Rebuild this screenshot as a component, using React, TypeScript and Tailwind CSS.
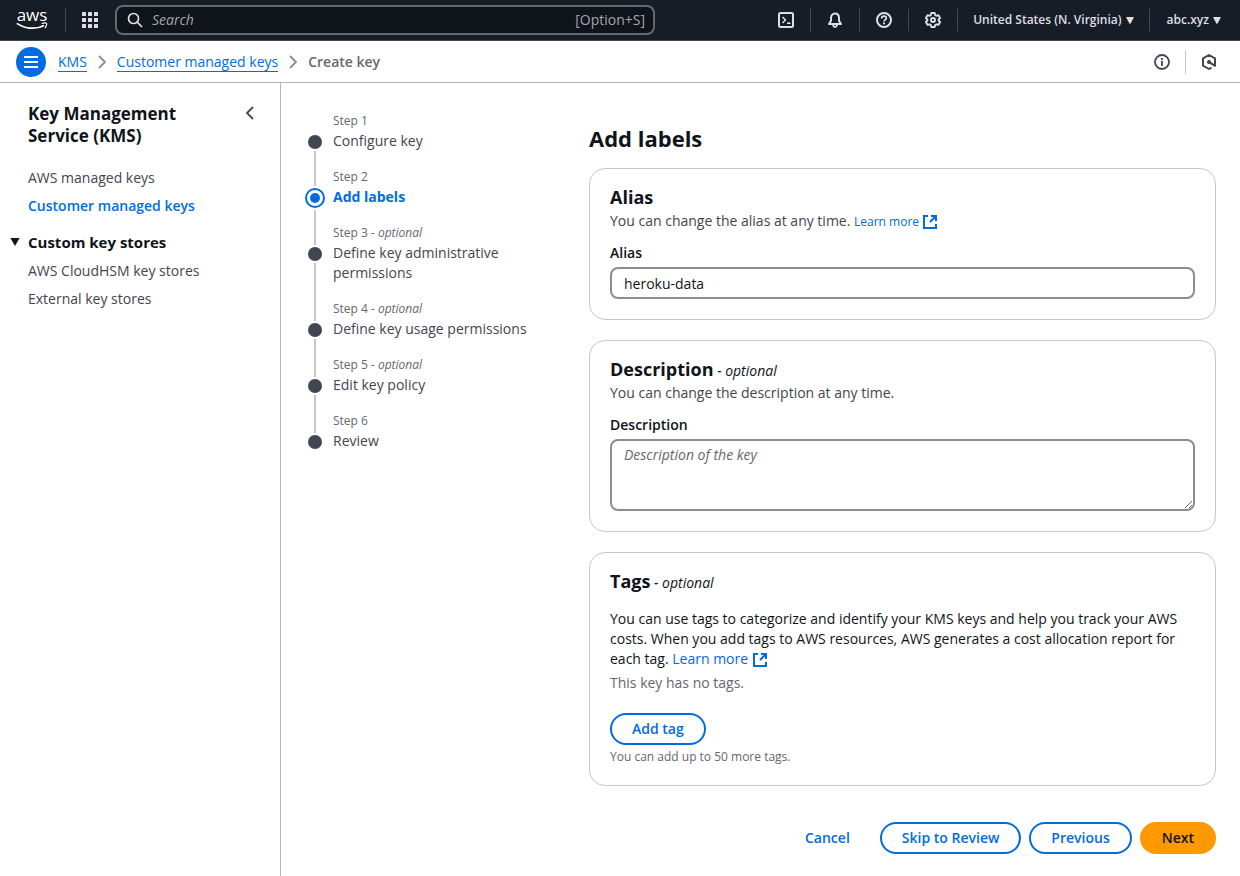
import { useState, type ReactNode } from 'react';
import clsx from 'clsx';

interface Step {
  title: string;
  optional?: boolean;
}

const STEPS: Step[] = [
  { title: 'Configure key' },
  { title: 'Add labels' },
  { title: 'Define key administrative permissions', optional: true },
  { title: 'Define key usage permissions', optional: true },
  { title: 'Edit key policy', optional: true },
  { title: 'Review' },
];

const ACTIVE_STEP = 1;

const Icon = ({ children, className = 'size-4' }: { children: ReactNode; className?: string }) => (
  <svg
    viewBox="0 0 16 16"
    fill="none"
    stroke="currentColor"
    strokeWidth="2"
    strokeLinejoin="round"
    className={clsx('shrink-0', className)}
    aria-hidden
  >
    {children}
  </svg>
);

const ExternalIcon = () => (
  <svg viewBox="0 0 16 16" fill="none" stroke="currentColor" strokeWidth="2" className="inline-block size-4 align-text-bottom" aria-hidden>
    <path d="M6 2H2v12h12v-4M9 2h5v5M14 2 8 8" />
  </svg>
);

const Caret = () => (
  <svg viewBox="0 0 8 7" fill="currentColor" className="h-[7px] w-2" aria-hidden>
    <path d="M.6 0h6.8q.6 0 .4.6L4.6 6.4q-.6.8-1.2 0L.2.6Q0 0 .6 0Z" />
  </svg>
);

const AwsLogo = () => (
  <a href="#" aria-label="AWS home" className="flex w-8 flex-col items-center text-white">
    <span className="h-3 text-[17px] leading-[10px] font-medium">aws</span>
    <svg viewBox="0 0 32 8" fill="none" stroke="currentColor" className="h-2 w-8" aria-hidden>
      <path d="M.8 1.4C9.5 7.2 20.5 7.6 28 3.4" strokeWidth="1.7" />
      <path d="M25.6 1.5c2.2-.6 4.4-.6 4.9-.1.5.6-.1 3-1.6 4.7" strokeWidth="1.2" />
    </svg>
  </a>
);

const TopBar = () => (
  <header className="flex h-[41px] items-center border-b border-[#424650] bg-[#161d26] pl-4 text-[#dedee3]">
    <AwsLogo />
    <div className="ml-[17px] h-6 w-px bg-[#424650]" />
    <button type="button" aria-label="Services" className="ml-4">
      <svg viewBox="0 0 16 16" fill="currentColor" className="size-4" aria-hidden>
        {[0, 6, 12].map((y) => [0, 6, 12].map((x) => <rect key={`${x}-${y}`} x={x} y={y} width="4" height="4" rx=".5" />))}
      </svg>
    </button>
    <label className="ml-[17px] flex h-[30px] w-[540px] items-center rounded-lg border-2 border-[#656871] bg-[#0f141a] pr-2 pl-[10px]">
      <Icon>
        <circle cx="6.5" cy="6.5" r="5" strokeWidth="1.7" />
        <path d="m10.2 10.2 4.8 4.8" strokeWidth="1.7" />
      </Icon>
      <input
        type="text"
        aria-label="Search"
        placeholder="Search"
        className="ml-[9px] min-w-0 flex-1 bg-transparent text-sm outline-none placeholder:text-[#a4a4ad] placeholder:italic"
      />
      <span className="text-sm text-[#a4a4ad]">[Option+S]</span>
    </label>
    <nav className="ml-auto flex h-full items-center pr-[19px]">
      <button type="button" aria-label="CloudShell" className="px-4">
        <Icon>
          <rect x="1" y="1" width="14" height="14" rx="1.5" />
          <path d="m4.5 5 3 3-3 3" strokeWidth="1.5" />
          <path d="M9 11.2h3.5" strokeWidth="1.6" />
        </Icon>
      </button>
      <div className="h-6 w-px bg-[#424650]" />
      <button type="button" aria-label="Notifications" className="px-4">
        <Icon>
          <path d="M8 1.5C5.4 1.5 4 3.4 4 6v2.8L2 12h12l-2-3.2V6c0-2.6-1.4-4.5-4-4.5Z" strokeWidth="2" />
          <path d="M6 12.5c.2 1.7 1 2.5 2 2.5s1.8-.8 2-2.5" strokeWidth="1.8" />
        </Icon>
      </button>
      <div className="h-6 w-px bg-[#424650]" />
      <button type="button" aria-label="Help" className="px-4">
        <Icon>
          <circle cx="8" cy="8" r="7" />
          <path d="M5.7 6.5C5.7 5 6.7 4.2 8 4.2s2.3.8 2.3 2c0 1.6-2.3 1.7-2.3 3.4" strokeWidth="1.8" />
          <path d="M8 10.6v1.7" strokeWidth="2" />
        </Icon>
      </button>
      <div className="h-[22px] w-px bg-[#424650]" />
      <button type="button" aria-label="Settings" className="px-4">
        <Icon>
          <path
            d="M6.3 1h3.4l.5 2.1 1.2.7 2.1-.6 1.6 2.9L13.6 7.5v1l1.5 1.5-1.6 2.9-2.1-.6-1.2.7-.5 2H6.3l-.5-2-1.2-.7-2.1.6L.9 10l1.5-1.5v-1L.9 6.1l1.6-2.9 2.1.6 1.2-.7Z"
            strokeWidth="1.9"
          />
          <circle cx="8" cy="8" r="2" strokeWidth="1.9" />
        </Icon>
      </button>
      <div className="h-[22px] w-px bg-[#424650]" />
      <button type="button" className="flex items-center gap-1 px-[15px] text-xs font-semibold">
        United States (N. Virginia) <Caret />
      </button>
      <div className="h-[22px] w-px bg-[#424650]" />
      <button type="button" className="flex items-center gap-1 pl-[17px] text-xs font-semibold">
        abc.xyz <Caret />
      </button>
    </nav>
  </header>
);

const Chevron = ({ left }: { left?: boolean }) => (
  <Icon>
    <path d={left ? 'M11 2 5 8l6 6' : 'm5 2 6 6-6 6'} strokeWidth="1.8" strokeLinejoin="miter" />
  </Icon>
);

const BreadcrumbBar = () => (
  <div className="flex h-[42px] items-center border-b border-[#b4b4bb] pr-[23px] pl-4">
    <button
      type="button"
      aria-label="Open navigation"
      className="flex size-[30px] items-center justify-center rounded-full bg-[#006ce0] text-white"
    >
      <Icon>
        <path d="M1 3h14M1 8h14M1 13h14" />
      </Icon>
    </button>
    <nav aria-label="Breadcrumbs" className="ml-3 flex items-center gap-[7px] text-sm">
      <a href="#" className="border-b border-[#006ce0] leading-[19px] text-[#006ce0]">KMS</a>
      <span className="text-[#8c8c94]"><Chevron /></span>
      <a href="#" className="border-b border-[#006ce0] leading-[19px] text-[#006ce0]">Customer managed keys</a>
      <span className="text-[#8c8c94]"><Chevron /></span>
      <span className="font-semibold text-[#656871]">Create key</span>
    </nav>
    <div className="ml-auto flex items-center text-[#424650]">
      <button type="button" aria-label="Info">
        <Icon>
          <circle cx="8" cy="8" r="7" strokeWidth="1.8" />
          <path d="M8 4v2M8 7v5" strokeWidth="1.8" />
        </Icon>
      </button>
      <div className="mx-[15px] h-6 w-px bg-[#c6c6cd]" />
      <button type="button" aria-label="Amazon Q">
        <Icon>
          <path d="M10.5 13.6 8 15l-6-3.400V4.400L8 1l6 3.400v7.400L8.500 8.300" strokeWidth="2" />
          <circle cx="8" cy="8" r="1.600" fill="currentColor" strokeWidth="1" />
        </Icon>
      </button>
    </div>
  </div>
);

const SideNav = () => (
  <aside className="w-[281px] shrink-0 border-r border-[#b4b4bb] pt-5 pr-[22px] pl-7 text-sm leading-5 text-[#424650]">
    <div className="flex items-start justify-between">
      <h2 className="w-[180px] text-[17px] leading-[22px] font-bold text-[#0f141a]">Key Management Service (KMS)</h2>
      <button type="button" aria-label="Close navigation" className="mt-0.5">
        <Chevron left />
      </button>
    </div>
    <ul className="mt-[21px] space-y-2">
      <li><a href="#">AWS managed keys</a></li>
      <li><a href="#" className="font-semibold text-[#006ce0]">Customer managed keys</a></li>
    </ul>
    <details open className="mt-4">
      <summary className="-ml-[18px] flex cursor-pointer list-none items-center gap-2 text-[15px] leading-5 font-bold text-[#0f141a]">
        <svg viewBox="0 0 8 7" fill="currentColor" className="h-2 w-[10px]" aria-hidden>
          <path d="M0 0h8L4 7Z" />
        </svg>
        Custom key stores
      </summary>
      <ul className="mt-[9px] space-y-2">
        <li><a href="#">AWS CloudHSM key stores</a></li>
        <li><a href="#">External key stores</a></li>
      </ul>
    </details>
  </aside>
);

const StepList = () => (
  <nav aria-label="Steps" className="w-[240px] shrink-0">
    <ol className="text-sm leading-5 text-[#424650]">
      {STEPS.map(({ title, optional }, index) => {
        const active = index === ACTIVE_STEP;
        const last = index === STEPS.length - 1;
        return (
          <li key={title} className="flex gap-2">
            <div className="flex w-5 flex-col items-center gap-0.5">
              <div className={clsx('w-0.5', active ? 'h-[19px]' : 'h-[22px]', index > 0 && 'bg-[#c6c6cd]')} />
              {active ? (
                <div className="size-5 rounded-full border-2 border-[#006ce0] p-[3px]">
                  <div className="size-[10px] rounded-full bg-[#006ce0]" />
                </div>
              ) : (
                <div className="size-[14px] rounded-full bg-[#424650]" />
              )}
              {!last && <div className="w-0.5 flex-1 bg-[#c6c6cd]" />}
            </div>
            <div className="flex-1 pb-4">
              <p className="text-xs leading-5 text-[#656871]">
                Step {index + 1}
                {optional && <i> - optional</i>}
              </p>
              <a
                href="#"
                aria-current={active ? 'step' : undefined}
                className={clsx('block', active && 'font-bold text-[#006ce0]')}
              >
                {title}
              </a>
            </div>
          </li>
        );
      })}
    </ol>
  </nav>
);

interface CardProps {
  title: string;
  optional?: boolean;
  children: ReactNode;
}

const Card = ({ title, optional, children }: CardProps) => (
  <section className="rounded-2xl border border-[#c6c6cd] px-5 pt-4 pb-5">
    <h2 className="text-lg leading-6 font-bold">
      {title}
      {optional && <i className="text-sm font-normal"> - optional</i>}
    </h2>
    {children}
  </section>
);

const OutlineButton = ({ children }: { children: ReactNode }) => (
  <button
    type="button"
    className="h-8 rounded-full border-2 border-[#006ce0] px-5 text-sm font-semibold text-[#006ce0]"
  >
    {children}
  </button>
);

const App = () => {
  const [alias, setAlias] = useState('heroku-data');
  const [description, setDescription] = useState('');

  return (
    <div className="flex min-h-screen flex-col bg-white font-['Open_Sans',sans-serif] text-[#0f141a]">
      <TopBar />
      <BreadcrumbBar />
      <div className="flex flex-1">
        <SideNav />
        <div className="flex flex-1 gap-11 px-6 pt-7 pb-[22px]">
          <StepList />
          <main className="min-w-0 flex-1 pt-3 text-sm leading-5">
            <h1 className="text-[22px] leading-[30px] font-bold">Add labels</h1>
            <div className="mt-[15px] space-y-5">
              <Card title="Alias">
                <p className="mt-0.5 text-[#424650]">
                  You can change the alias at any time.{' '}
                  <a href="#" className="text-xs text-[#006ce0]">Learn more <ExternalIcon /></a>
                </p>
                <label htmlFor="alias" className="mt-3 block font-semibold">Alias</label>
                <input
                  id="alias"
                  value={alias}
                  onChange={(event) => setAlias(event.target.value)}
                  className="mt-1 block h-8 w-full rounded-lg border-2 border-[#8c8c94] px-3"
                />
              </Card>
              <Card title="Description" optional>
                <p className="mt-0.5 text-[#424650]">You can change the description at any time.</p>
                <label htmlFor="description" className="mt-3 block font-semibold">Description</label>
                <textarea
                  id="description"
                  value={description}
                  placeholder="Description of the key"
                  onChange={(event) => setDescription(event.target.value)}
                  className="mt-1 block h-[72px] w-full rounded-lg border-2 border-[#8c8c94] px-3 py-1 placeholder:text-[#656871] placeholder:italic"
                />
              </Card>
              <Card title="Tags" optional>
                <p className="mt-4">
                  You can use tags to categorize and identify your KMS keys and help you track your AWS costs. When you
                  add tags to AWS resources, AWS generates a cost allocation report for each tag.{' '}
                  <a href="#" className="text-[#006ce0]">Learn more <ExternalIcon /></a>
                </p>
                <p className="mt-1 mb-5 text-[#656871]">This key has no tags.</p>
                <OutlineButton>Add tag</OutlineButton>
                <p className="mt-1 text-xs leading-4 text-[#656871]">You can add up to 50 more tags.</p>
              </Card>
            </div>
            <div className="mt-9 flex justify-end gap-2">
              <button type="button" className="h-8 px-[22px] text-sm font-semibold text-[#006ce0]">Cancel</button>
              <OutlineButton>Skip to Review</OutlineButton>
              <OutlineButton>Previous</OutlineButton>
              <button type="button" className="h-8 rounded-full bg-[#ff9900] px-[22px] text-sm font-semibold">Next</button>
            </div>
          </main>
        </div>
      </div>
    </div>
  );
};

export default App;
